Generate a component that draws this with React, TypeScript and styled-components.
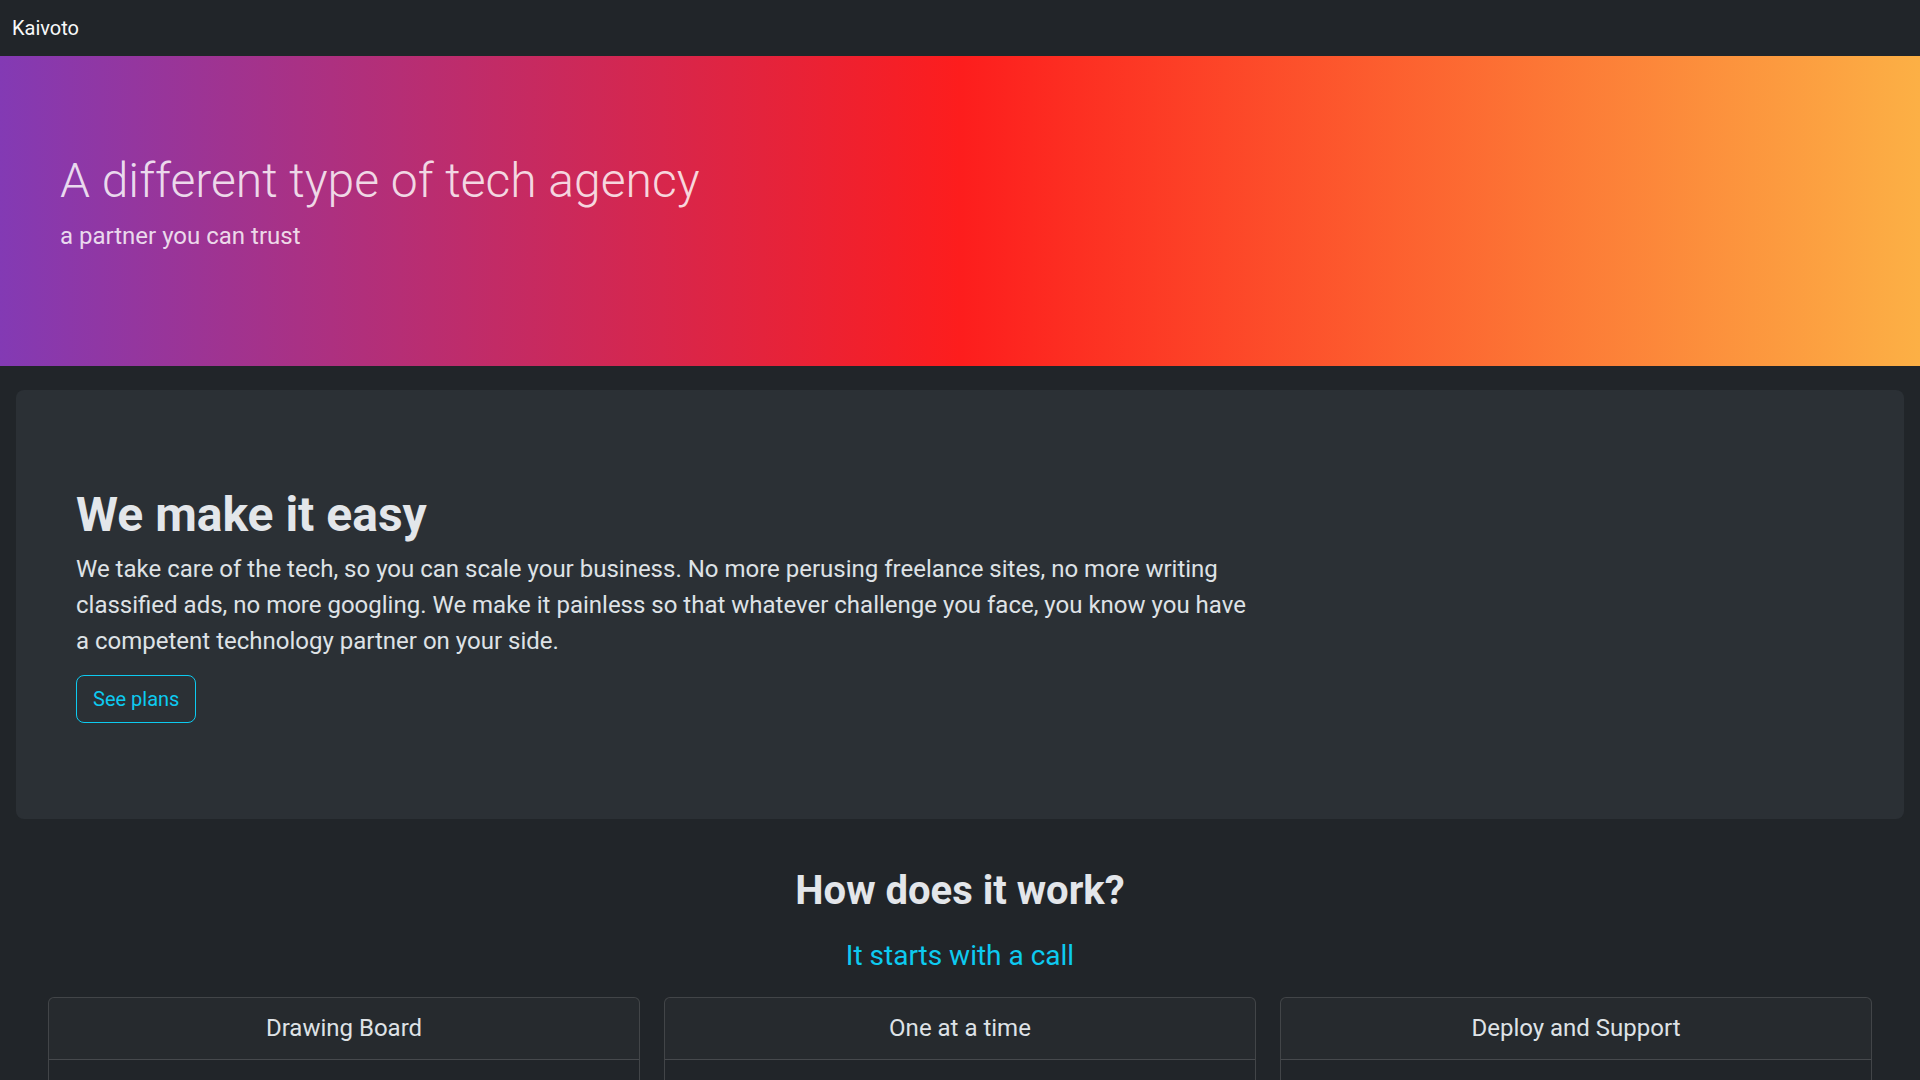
import React from "react";
import styled, { createGlobalStyle } from "styled-components";

const GlobalStyle = createGlobalStyle`
  *, *::before, *::after { box-sizing: border-box; }
  body {
    margin: 0;
    background: #212529;
    color: #dee2e6;
    font-family: Roboto, "Liberation Sans", Arial, sans-serif;
    font-size: 16px;
    line-height: 1.5;
  }
`;

const Navbar = styled.nav`
  height: 56px;
  display: flex;
  align-items: center;
  padding: 0 12px;
  background: #212529;
`;

const Brand = styled.a`
  font-size: 20px;
  line-height: 30px;
  color: #f8f9fa;
  text-decoration: none;
`;

const Hero = styled.header`
  background: linear-gradient(90deg, #833ab4 0%, #fd1d1d 50%, #fcb045 100%);
  padding: 48px;
`;

const HeroInner = styled.div`
  padding: 48px 12px;
`;

const HeroTitle = styled.h1`
  margin: 0 0 8px;
  font-size: 48px;
  font-weight: 300;
  line-height: 1.2;
  color: rgba(255, 255, 255, 0.82);
`;

const HeroSub = styled.p`
  margin: 0 0 16px;
  font-size: 24px;
  font-weight: 400;
  line-height: 1.5;
  color: rgba(255, 255, 255, 0.82);
`;

const Jumbo = styled.section`
  margin: 24px 16px 0;
  padding: 48px;
  background: #2b3035;
  border-radius: 8px;
`;

const JumboInner = styled.div`
  padding: 48px 12px;
`;

const JumboTitle = styled.h2`
  margin: 0 0 8px;
  font-size: 48px;
  font-weight: 700;
  line-height: 1.2;
  color: #e3e6ea;
`;

const JumboText = styled.p`
  width: 66.6667%;
  margin: 0 0 16px;
  font-size: 24px;
  line-height: 1.5;
  font-weight: 400;
`;

const OutlineButton = styled.button`
  font-family: inherit;
  font-size: 20px;
  line-height: 1.5;
  padding: 8px 16px;
  color: #0dcaf0;
  background: transparent;
  border: 1px solid #0dcaf0;
  border-radius: 8px;
  cursor: pointer;
`;

const HowSection = styled.section`
  padding: 48px 48px 48px;
  display: flex;
  flex-direction: column;
  align-items: center;
`;

const HowTitle = styled.h2`
  margin: 0 0 24px;
  font-size: 40px;
  font-weight: 700;
  line-height: 1.2;
  color: #e3e6ea;
`;

const HowSub = styled.h3`
  margin: 0 0 24px;
  font-size: 28px;
  font-weight: 400;
  line-height: 1.2;
  color: #0dcaf0;
`;

const CardRow = styled.div`
  width: 100%;
  display: grid;
  grid-template-columns: repeat(3, 1fr);
  gap: 24px;
`;

const Card = styled.div`
  border: 1px solid rgba(255, 255, 255, 0.15);
  border-radius: 6px;
  overflow: hidden;
  background: #212529;
`;

const CardHeader = styled.div`
  padding: 16px;
  background: rgba(222, 226, 230, 0.03);
  border-bottom: 1px solid rgba(255, 255, 255, 0.15);
  text-align: center;
`;

const CardTitle = styled.h4`
  margin: 0;
  font-size: 24px;
  font-weight: 400;
  line-height: 1.2;
  color: #dee2e6;
`;

const CardBody = styled.div`
  min-height: 220px;
  padding: 24px 16px;
`;

const steps = ["Drawing Board", "One at a time", "Deploy and Support"];

export default function App() {
  return (
    <>
      <GlobalStyle />
      <Navbar>
        <Brand href="#">Kaivoto</Brand>
      </Navbar>
      <Hero>
        <HeroInner>
          <HeroTitle>A different type of tech agency</HeroTitle>
          <HeroSub>a partner you can trust</HeroSub>
        </HeroInner>
      </Hero>
      <Jumbo>
        <JumboInner>
          <JumboTitle>We make it easy</JumboTitle>
          <JumboText>
            We take care of the tech, so you can scale your business. No more
            perusing freelance sites, no more writing classified ads, no more
            googling. We make it painless so that whatever challenge you face,
            you know you have a competent technology partner on your side.
          </JumboText>
          <OutlineButton type="button">See plans</OutlineButton>
        </JumboInner>
      </Jumbo>
      <HowSection>
        <HowTitle>How does it work?</HowTitle>
        <HowSub>It starts with a call</HowSub>
        <CardRow>
          {steps.map((s) => (
            <Card key={s}>
              <CardHeader>
                <CardTitle>{s}</CardTitle>
              </CardHeader>
              <CardBody />
            </Card>
          ))}
        </CardRow>
      </HowSection>
    </>
  );
}
